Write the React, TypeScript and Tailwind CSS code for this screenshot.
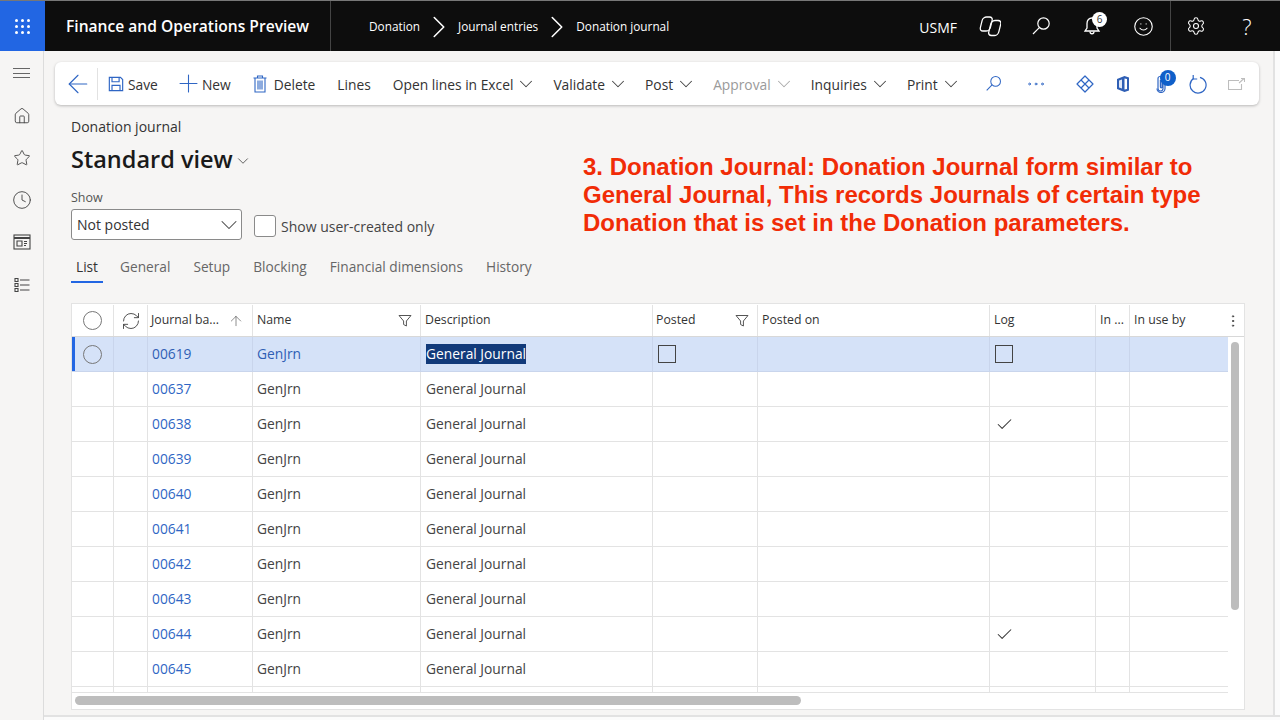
import { ArrowUp, Check, ChevronDown, ChevronRight, Clock, EllipsisVertical, Ellipsis, Home, Plus, RefreshCw, Settings, Smile, Star, ArrowLeft } from "lucide-react";

const gridCols = "grid w-[1156px] grid-cols-[42px_34px_105px_168px_232px_105px_232px_106px_34px_98px]";

const rows = [
  { id: "00637", log: false },
  { id: "00638", log: true },
  { id: "00639", log: false },
  { id: "00640", log: false },
  { id: "00641", log: false },
  { id: "00642", log: false },
  { id: "00643", log: false },
  { id: "00644", log: true },
  { id: "00645", log: false },
];

function SearchIcon({ className }: { className: string }) {
  return (
    <svg viewBox="0 0 20 20" fill="none" stroke="currentColor" strokeWidth="1.2" className={className}>
      <circle cx="12.5" cy="7.5" r="5.7" />
      <path d="M8.3 11.7 2 18" />
    </svg>
  );
}

function FilterIcon() {
  return (
    <svg viewBox="0 0 14 14" fill="none" stroke="#555" strokeWidth="1" className="h-[14px] w-[14px]">
      <path d="M1 1.5h12L8.4 7v5L5.6 10.5V7z" />
    </svg>
  );
}

function SaveIcon() {
  return (
    <svg viewBox="0 0 18 18" fill="none" stroke="#2f66c4" strokeWidth="1.3" className="h-4 w-4">
      <path d="M1.5 1.500h12.500l2.500 2.500v12.500h-15z" />
      <path d="M4.500 1.500v5h8v-5M4.500 16.500v-6h9v6" />
    </svg>
  );
}

function TrashIcon() {
  return (
    <svg viewBox="0 0 14 18" fill="none" stroke="#2f66c4" strokeWidth="1.1" className="h-[18px] w-[14px]">
      <path d="M.5 3h13M4.500 3V1h5v2M2 3v14h10V3" />
      <path d="M5 5.500v9M7 5.500v9M9 5.500v9" />
    </svg>
  );
}

function CopilotIcon() {
  return (
    <svg viewBox="0 0 24 22" fill="none" stroke="white" strokeWidth="1.3" className="h-[22px] w-6">
      <rect x="6.500" y="2" width="10" height="14" rx="3.500" transform="skewX(-14)" />
      <rect x="13.500" y="5.500" width="10" height="15" rx="3.500" transform="skewX(-14) translate(2.500 0)" />
    </svg>
  );
}

function BellIcon() {
  return (
    <svg viewBox="0 0 20 20" fill="none" stroke="white" strokeWidth="1.3" className="h-5 w-5">
      <path d="M10 2c3 0 5 2.300 5 5.500V12l2 3H3l2-3V7.500C5 4.300 7 2 10 2z" />
      <path d="M8 15.500c0 3 4 3 4 0" />
    </svg>
  );
}

function WorkspaceIcon() {
  return (
    <svg viewBox="0 0 18 16" fill="none" stroke="#444" strokeWidth="1.1" className="h-4 w-[18px]">
      <rect x="1" y="1" width="16" height="14" />
      <path d="M1 4h16" strokeWidth="2" />
      <path d="M4 7h5v5H4zM11 7.500h3M11 9.500h3M11 11.500h2" />
    </svg>
  );
}

function ModulesIcon() {
  return (
    <svg viewBox="0 0 16 16" fill="none" stroke="#444" strokeWidth="1.1" className="h-4 w-4">
      <path d="M1 1.500h3v3H1zM1 6.500h3v3H1zM1 11.500h3v3H1zM6 3h9.500M6 8h9.500M6 13h9.500" />
    </svg>
  );
}

function DiamondIcon() {
  return (
    <svg viewBox="0 0 18 18" fill="none" stroke="#2f66c4" strokeWidth="1.2" strokeLinejoin="round" className="h-[18px] w-[18px]">
      <path d="M9 1 17 9 9 17 1 9z" />
      <path d="M5 5l8 8M13 5 5 13" />
    </svg>
  );
}

function OfficeIcon() {
  return (
    <svg viewBox="0 0 14 18" className="h-[18px] w-[14px]">
      <path d="M1 4 8.500 1 13 2.500v13L8.500 17 1 14z" fill="#2f5fb5" />
      <path d="M8.500 3.500 11 4v10l-2.500.5z" fill="white" />
      <path d="M3 5.500 6 4.500v9l-3-1z" fill="#dfe8f8" />
    </svg>
  );
}

function ClipIcon() {
  return (
    <svg viewBox="0 0 10 18" fill="none" stroke="#2f66c4" strokeWidth="1.2" className="h-[18px] w-[10px]">
      <path d="M7 4v9.500a2.500 2.500 0 0 1-5 0V3.500a2 2 0 0 1 4 0V12a.8.8 0 0 1-1.600 0V5" />
      <path d="M1 13.500a4 4 0 0 0 8 0V5" />
    </svg>
  );
}

function ReloadIcon() {
  return (
    <svg viewBox="0 0 18 20" fill="none" stroke="#2f66c4" strokeWidth="1.2" className="h-5 w-[18px]">
      <path d="M11 3.300A8 8 0 1 1 4.500 4.500" />
      <path d="M4.200 1v4h4" />
    </svg>
  );
}

function OpenNewIcon() {
  return (
    <svg viewBox="0 0 17 12" fill="none" stroke="#bdbdbd" strokeWidth="1.100" className="h-3 w-[17px]">
      <path d="M11 2.500H.5v9h13V6M11 5l5-4.500M13 .5h3.500V4" />
    </svg>
  );
}

function CircleMark() {
  return <div className="h-[19px] w-[19px] rounded-full border border-[#777]" />;
}

function ToolButton({ label, disabled }: { label: string; disabled?: boolean }) {
  return (
    <div className={`ml-[16px] flex shrink-0 items-center gap-[2px] whitespace-nowrap ${disabled ? "text-[#9a9a9a]" : "text-[#333]"}`}>
      <span className="pt-[4px]">{label}</span>
      <ChevronDown strokeWidth={1.100} className={`h-[22px] w-[22px] ${disabled ? "text-[#aaa]" : "text-[#444]"}`} />
    </div>
  );
}

function DataRow({ id, log }: { id: string; log: boolean }) {
  const cell = "flex items-center border-r border-[#e3e3e3] px-[5px]";
  return (
    <div className={`${gridCols} h-[35px] border-b border-[#e3e3e3] text-[13.8px] text-[#444]`}>
      <div className={cell} />
      <div className={cell} />
      <div className={`${cell} pl-[4px] text-[#2f66c4]`}>{id}</div>
      <div className={`${cell} pl-[4px]`}>GenJrn</div>
      <div className={cell}>General Journal</div>
      <div className={cell} />
      <div className={cell} />
      <div className={cell}>{log && <Check strokeWidth={1.300} className="h-[19px] w-[19px] text-[#333]" />}</div>
      <div className={cell} />
      <div />
    </div>
  );
}

export default function App() {
  const headCell = "flex items-center border-r border-[#e3e3e3] px-[4px]";
  const selCell = "flex items-center border-r border-[#c9d5ec] px-[5px]";

  return (
    <div className="relative flex h-[720px] w-[1280px] flex-col overflow-hidden bg-[#f6f5f4] font-['Open_Sans',sans-serif]">
      {/* top bar */}
      <header className="flex h-[51px] shrink-0 items-center border-t border-[#777] bg-[#0d0d0d] text-white">
        <div className="flex h-full w-[45px] items-center justify-center bg-[#2266e3]">
          <div className="grid grid-cols-3 gap-[3px]">
            {Array.from({ length: 9 }).map((_, i) => (
              <span key={i} className="h-[3px] w-[3px] rounded-full bg-white" />
            ))}
          </div>
        </div>
        <div className="flex h-full w-[286px] items-center border-r border-[#444] pl-[21px] pt-[2px] text-[15.6px] font-semibold">
          Finance and Operations Preview
        </div>
        <nav className="flex items-center pl-[38px] pt-[1px] text-[11.8px]">
          <span>Donation</span>
          <ChevronRight strokeWidth={1} className="h-[38px] w-[38px]" />
          <span>Journal entries</span>
          <ChevronRight strokeWidth={1} className="h-[38px] w-[38px]" />
          <span>Donation journal</span>
        </nav>
        <div className="ml-auto flex h-full items-center">
          <span className="mr-[20px] pt-[2px] text-[14px]">USMF</span>
          <div className="mr-[30px]"><CopilotIcon /></div>
          <SearchIcon className="mr-[31px] h-5 w-5" />
          <div className="relative mr-[31px]">
            <BellIcon />
            <span className="absolute -right-[5px] -top-[4px] flex h-[15px] w-[15px] items-center justify-center rounded-full bg-white text-[10px] text-[#333]">6</span>
          </div>
          <Smile strokeWidth={1.300} className="mr-[16px] h-[21px] w-[21px]" />
          <div className="flex h-full items-center border-l border-[#444] pl-[15px]">
            <Settings strokeWidth={1.300} className="mr-[30px] h-5 w-5" />
            <span className="mr-[22px] w-[22px] text-center text-[22px] font-light">?</span>
          </div>
        </div>
      </header>

      <div className="flex min-h-0 flex-1">
        {/* side nav */}
        <aside className="flex w-[44px] shrink-0 flex-col items-center border-r border-[#dcdcdc] text-[#444]">
          <div className="mt-[17px] flex h-[10px] w-[17px] flex-col justify-between">
            <span className="h-px bg-[#666]" />
            <span className="h-px bg-[#666]" />
            <span className="h-px bg-[#666]" />
          </div>
          <Home strokeWidth={1.200} className="mt-[29px] h-[18px] w-[18px]" />
          <Star strokeWidth={1.200} className="mt-[24px] h-[18px] w-[18px]" />
          <Clock strokeWidth={1.100} className="mt-[23px] h-5 w-5" />
          <div className="mt-[24px]"><WorkspaceIcon /></div>
          <div className="mt-[27px]"><ModulesIcon /></div>
        </aside>

        <div className="flex min-w-0 flex-1 flex-col">
          <div className="flex min-h-0 flex-1">
            <main className="relative min-w-0 flex-1 pl-[11px] pr-[14px] pt-[11px]">
              {/* action pane */}
              <div className="flex h-[43px] items-center rounded-[6px] bg-white pl-[8px] text-[13.8px] shadow-[0_1px_3px_rgba(0,0,0,0.25)]">
                <ArrowLeft strokeWidth={0.900} className="h-[30px] w-[30px] shrink-0 text-[#2f66c4]" />
                <div className="ml-[4px] mr-[10px] h-[32px] w-px shrink-0 bg-[#e2e2e2]" />
                <div className="flex shrink-0 items-center gap-[4px] text-[#333]"><SaveIcon /><span className="pt-[4px]">Save</span></div>
                <div className="ml-[16px] flex shrink-0 items-center text-[#333]">
                  <Plus strokeWidth={0.900} className="h-[29px] w-[29px] text-[#2f66c4]" /><span className="-ml-[1px] pt-[4px]">New</span>
                </div>
                <div className="ml-[22px] flex shrink-0 items-center gap-[7px] text-[#333]"><TrashIcon /><span className="pt-[4px]">Delete</span></div>
                <span className="ml-[22px] shrink-0 pt-[4px] text-[#333]">Lines</span>
                <div className="ml-[6px]"><ToolButton label="Open lines in Excel" /></div>
                <ToolButton label="Validate" />
                <ToolButton label="Post" />
                <ToolButton label="Approval" disabled />
                <ToolButton label="Inquiries" />
                <ToolButton label="Print" />
                <SearchIcon className="ml-[23px] h-[17px] w-[17px] shrink-0 text-[#2f66c4]" />
                <Ellipsis strokeWidth={1} className="ml-[23px] h-[22px] w-[22px] shrink-0 text-[#2f66c4]" />
                <div className="ml-[29px]"><DiamondIcon /></div>
                <div className="ml-[22px]"><OfficeIcon /></div>
                <div className="relative ml-[26px]">
                  <ClipIcon />
                  <span className="absolute -right-[10px] -top-[5px] flex h-4 w-4 items-center justify-center rounded-full bg-[#0f5fc9] text-[10px] text-white">0</span>
                </div>
                <div className="ml-[23px]"><ReloadIcon /></div>
                <div className="ml-[21px]"><OpenNewIcon /></div>
              </div>

              {/* page title and filters */}
              <p className="ml-[16px] mt-[12px] text-[14px] leading-[19px] text-[#333]">Donation journal</p>
              <div className="ml-[16px] mt-[7px] flex items-center">
                <h1 className="text-[23.5px] font-semibold leading-[32px] text-[#1a1a1a]">Standard view</h1>
                <ChevronDown strokeWidth={1.100} className="ml-[1px] mt-[4px] h-[18px] w-[18px] text-[#444]" />
              </div>
              <p className="ml-[16px] mt-[14px] text-[12.5px] leading-[17px] text-[#555]">Show</p>
              <div className="ml-[16px] mt-[3px] flex items-center">
                <div className="flex h-[31px] w-[171px] items-center justify-between rounded-[3px] border border-[#8a8a8a] bg-white pl-[5px] pr-[3px] text-[14px] text-[#333]">
                  <span>Not posted</span>
                  <ChevronDown strokeWidth={0.900} className="-mr-[5px] h-[28px] w-[28px] text-[#444]" />
                </div>
                <div className="ml-[12px] mt-[2px] h-[22px] w-[22px] rounded-[3px] border border-[#8a8a8a] bg-white" />
                <span className="ml-[5px] mt-[3px] text-[14px] text-[#444]">Show user-created only</span>
              </div>

              <div className="ml-[16px] mt-[14px] flex items-start text-[13.7px] leading-[26px] text-[#666]">
                <div className="flex w-[32px] flex-col items-center">
                  <span className="text-[#333]">List</span>
                  <span className="mt-[1px] h-[2px] w-[32px] bg-[#2266e3]" />
                </div>
                <span className="ml-[17px]">General</span>
                <span className="ml-[23px]">Setup</span>
                <span className="ml-[23px]">Blocking</span>
                <span className="ml-[23px]">Financial dimensions</span>
                <span className="ml-[23px]">History</span>
              </div>

              {/* grid */}
              <section className="relative ml-[16px] mt-[20px] h-[407px] w-[1174px] overflow-hidden border border-[#e3e3e3] bg-white">
                <div className="h-[33px] border-b border-[#d8d8d8]">
                  <div className={`${gridCols} h-full pt-px text-[12.3px] text-[#333]`}>
                    <div className={`${headCell} justify-center`}><CircleMark /></div>
                    <div className={`${headCell} justify-center`}><RefreshCw strokeWidth={1.100} className="h-5 w-5 text-[#444]" /></div>
                    <div className={`${headCell} justify-between pl-[3px] pr-[8px]`}>
                      <span>Journal ba...</span>
                      <ArrowUp strokeWidth={1} className="h-4 w-4 text-[#555]" />
                    </div>
                    <div className={`${headCell} justify-between pr-[8px]`}><span>Name</span><FilterIcon /></div>
                    <div className={headCell}>Description</div>
                    <div className={`${headCell} justify-between pl-[3px] pr-[8px]`}><span>Posted</span><FilterIcon /></div>
                    <div className={headCell}>Posted on</div>
                    <div className={headCell}>Log</div>
                    <div className={headCell}>In ...</div>
                    <div className={`${headCell} w-[114px] justify-between border-r-0`}>
                      <span>In use by</span>
                      <EllipsisVertical strokeWidth={1.500} className="mr-[-1px] h-4 w-4 text-[#444]" />
                    </div>
                  </div>
                </div>

                {/* selected row */}
                <div className={`${gridCols} h-[35px] border-b border-[#c9d5ec] bg-[#d5e2f8] text-[13.8px] text-[#333]`}>
                  <div className="flex items-center justify-center border-l-[3px] border-r border-l-[#2266e3] border-r-[#c9d5ec] pr-[3px]"><CircleMark /></div>
                  <div className={selCell} />
                  <div className={`${selCell} pl-[4px] text-[#2f5fb5]`}>00619</div>
                  <div className={`${selCell} pl-[4px] text-[#2f5fb5]`}>GenJrn</div>
                  <div className={selCell}><span className="bg-[#123a7a] text-white">General Journal</span></div>
                  <div className={selCell}><span className="h-[18px] w-[18px] border-[1.5px] border-[#444]" /></div>
                  <div className={selCell} />
                  <div className={selCell}><span className="h-[18px] w-[18px] border-[1.5px] border-[#444]" /></div>
                  <div className={selCell} />
                  <div />
                </div>

                {rows.map((row) => (
                  <DataRow key={row.id} id={row.id} log={row.log} />
                ))}

                <div className={`${gridCols} h-[6px] border-b border-[#e3e3e3]`}>
                  {Array.from({ length: 9 }).map((_, i) => (
                    <div key={i} className="border-r border-[#e3e3e3]" />
                  ))}
                </div>

                {/* scrollbars */}
                <div className="absolute right-[5px] top-[38px] h-[268px] w-[8px] rounded-full bg-[#bdbdbd]" />
                <div className="absolute bottom-[4px] left-[3px] h-[9px] w-[726px] rounded-full bg-[#bdbdbd]" />
              </section>
            </main>
            {/* page frame, right edge */}
            <div className="w-[7px] shrink-0 border-l-2 border-[#e2e2e2] bg-[#fbfbfb]" />
          </div>
          {/* page frame, bottom edge */}
          <div className="h-[5px] shrink-0 border-t-2 border-[#e2e2e2] bg-[#fbfbfb]" />
        </div>
      </div>

      {/* annotation over the page */}
      <div className="absolute left-[583px] top-[153px] font-['Liberation_Sans',Arial,sans-serif] text-[24px] font-bold leading-[28px] text-[#f12c06]">
        <p>3. Donation Journal: Donation Journal form similar to</p>
        <p>General Journal, This records Journals of certain type</p>
        <p>Donation that is set in the Donation parameters.</p>
      </div>
    </div>
  );
}
